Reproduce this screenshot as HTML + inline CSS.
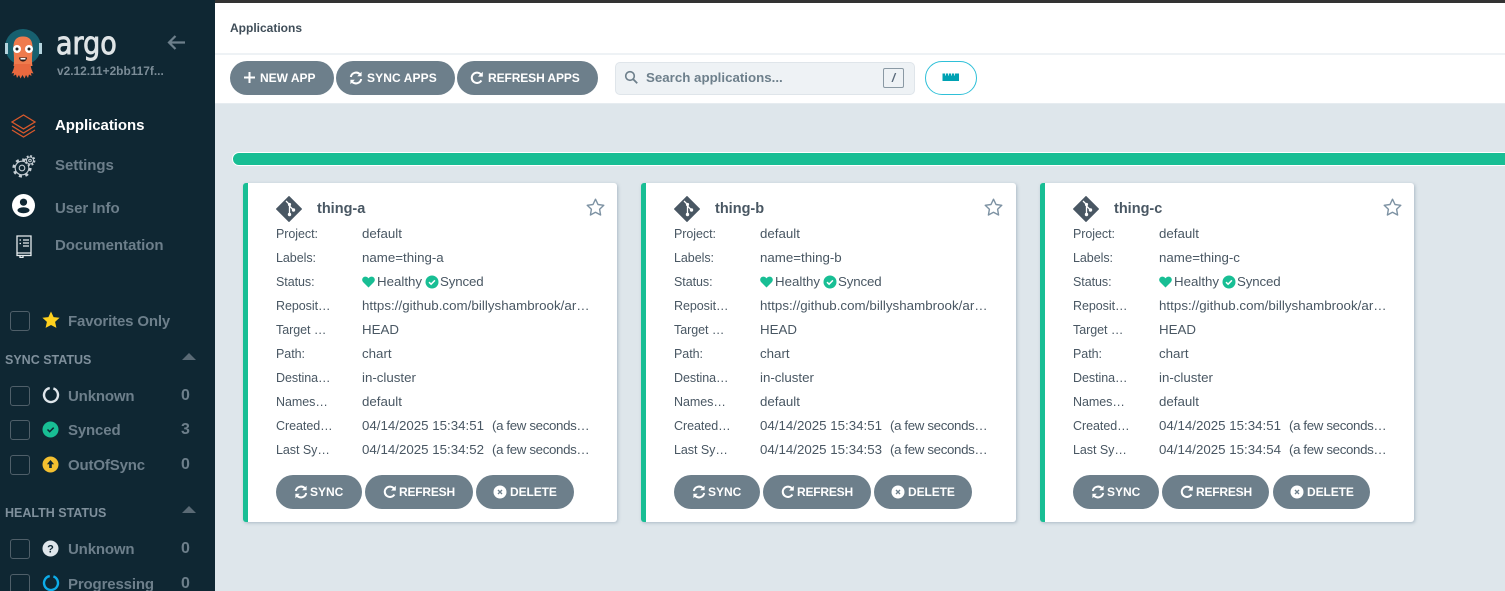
<!DOCTYPE html>
<html><head><meta charset="utf-8"><style>
*{box-sizing:border-box}
html,body{margin:0;padding:0;width:1505px;height:591px;overflow:hidden;background:#dee6eb;font-family:"Liberation Sans",sans-serif;color:#495763}
.a{position:absolute;white-space:nowrap}
#side{position:absolute;left:0;top:0;width:215px;height:591px;background:#0f2733;overflow:hidden}
.nav{position:absolute;left:55px;margin-top:1px;font-size:15px;letter-spacing:-.05px;font-weight:700;color:#6d7f8b;white-space:nowrap;line-height:20px}
.cb{position:absolute;left:10px;width:20px;height:20px;border:1.5px solid #4f5f69;border-radius:3px}
.fl{position:absolute;left:68px;margin-top:1px;font-size:15px;letter-spacing:-.15px;font-weight:700;color:#6d7f8b;line-height:20px;white-space:nowrap}
.ct{position:absolute;left:181px;font-size:16px;font-weight:700;color:#6d7f8b;line-height:20px}
.sh{position:absolute;left:5px;font-size:12.5px;font-weight:700;color:#7f909c;line-height:16px;white-space:nowrap}
.tri{position:absolute;left:182px;width:0;height:0;border-left:7px solid transparent;border-right:7px solid transparent;border-bottom:7px solid #5a6a75}
.btn{position:absolute;height:34px;border-radius:17px;background:#6d7f8b;color:#fff;font-size:12px;font-weight:700;line-height:34px;white-space:nowrap}
.btn svg{position:absolute}
.btn span{position:absolute;top:0}
.card{position:absolute;top:183px;width:374px;height:339px;background:#fff;border-left:5px solid #18be94;border-radius:3px;box-shadow:1px 1px 3px rgba(130,150,165,.55)}
.k,.v{position:absolute;line-height:16px;white-space:nowrap;color:#495763}
.k{left:28px;font-size:12.5px;letter-spacing:-.05px}.v{left:114px;font-size:13.3px}
.u{letter-spacing:.04px}
.s{left:244px;letter-spacing:-.36px}
.y{left:192px;letter-spacing:-.15px}
.ttl{position:absolute;left:69px;top:17px;font-size:14.5px;font-weight:700;line-height:18px;color:#495763}
</style></head><body>
<div class="a" style="left:0;top:0;width:1505px;height:3px;background:#333"></div>
<div class="a" style="left:215px;top:3px;width:1290px;height:52px;background:#fff;border-bottom:2px solid #eef2f5"></div>
<div class="a" style="left:215px;top:55px;width:1290px;height:49px;background:#fff;border-bottom:1px solid #e6ecf0"></div>
<div class="a" style="left:230px;top:20px;font-size:12px;font-weight:700;line-height:16px;color:#3f4d58">Applications</div>

<div class="btn" style="left:230px;top:61px;width:104px"><svg style="left:13px;top:10px" width="13" height="13" viewBox="0 0 13 13"><path d="M6.500 1v11M1 6.500h11" stroke="#fff" stroke-width="2"/></svg><span style="left:30px">NEW APP</span></div>
<div class="btn" style="left:336px;top:61px;width:119px"><svg style="left:13px;top:10px" width="14" height="14" viewBox="0 0 14 14"><path d="M1.800 6A5.300 5.300 0 0 1 11 3.400M12.200 8A5.300 5.300 0 0 1 3 10.600" fill="none" stroke="#fff" stroke-width="2"/><path d="M12.600.8v4.400H8.200zM1.400 13.200V8.800h4.400z" fill="#fff"/></svg><span style="left:31px;letter-spacing:.1px">SYNC APPS</span></div>
<div class="btn" style="left:457px;top:61px;width:141px"><svg style="left:13px;top:10px" width="14" height="14" viewBox="0 0 14 14"><path d="M11.400 9.500A5.200 5.200 0 1 1 11 3.500" fill="none" stroke="#fff" stroke-width="2"/><path d="M12.800.8v4.800H8z" fill="#fff"/></svg><span style="left:31px;letter-spacing:-.1px">REFRESH APPS</span></div>

<div class="a" style="left:615px;top:62px;width:300px;height:33px;background:#eef2f5;border:1px solid #dfe5ea;border-radius:5px"></div>
<svg class="a" style="left:624px;top:70px" width="15" height="15" viewBox="0 0 15 15"><circle cx="6" cy="6" r="4.300" fill="none" stroke="#6d7f8b" stroke-width="1.600"/><path d="M9.200 9.200l4 4" stroke="#6d7f8b" stroke-width="1.800"/></svg>
<div class="a" style="left:646px;top:69px;font-size:13.3px;font-weight:700;line-height:18px;color:#6d7f8b">Search applications...</div>
<div class="a" style="left:883px;top:68px;width:21px;height:20px;border:1px solid #8a99a4;border-radius:2px;font-size:12px;font-style:italic;font-weight:700;line-height:18px;text-align:center;color:#59697a">/</div>
<div class="a" style="left:925px;top:61px;width:52px;height:34px;border:1px solid #2fc0d8;border-radius:17px;background:#fff"></div>
<svg class="a" style="left:942px;top:72px" width="18" height="10" viewBox="0 0 18 10"><path d="M.5 1.500h16.500v7.500H.5z" fill="#00a2b3"/><path d="M3.500 1v2.500M6.500 1v2.500M9.500 1v2.500M12.500 1v2.500" stroke="#fff" stroke-width=".8"/></svg>

<div class="a" style="left:232px;top:152px;width:1290px;height:14px;background:#18be94;border:1px solid #fff;border-radius:7px"></div>

<div id="side">
<svg class="a" style="left:4px;top:28px" width="40" height="54" viewBox="0 0 40 54">
<circle cx="19" cy="19" r="18" fill="#17606f"/>
<path d="M1 15h3v11H1zM35 15h3v11h-3z" fill="#b5d3dd"/>
<path d="M9.500 21C9 11 13.500 8.500 19 8.500S29 11 28.500 21c-.3 6-1 12 0 17h-19c1-5 .3-11 0-17z" fill="#ef7b4d"/>
<path d="M10.500 36c-.3 4-1.500 7-3 9.500l2.500-.5-.5 3 2.500-1.500 1 3.500 2-3 1.500 3.500 2-3.500 2 3.500 1.500-3.500 2 3 1-3.500 2.500 1.500-.5-3 2.500.5c-1.500-2.500-2.700-5.500-3-9.500z" fill="#e9693f"/>
<circle cx="13" cy="21" r="4" fill="#fff"/><circle cx="25" cy="21" r="4" fill="#fff"/>
<circle cx="13" cy="21" r="1.500" fill="#222"/><circle cx="25" cy="21" r="1.500" fill="#222"/>
<path d="M15 29.500h8c-.4 3-2 4-4 4s-3.600-1-4-4z" fill="#2b1b17"/><path d="M16.500 30h5v1.500h-5z" fill="#fff"/>
</svg>
<div class="a" style="left:56px;top:26px;font-size:31px;line-height:36px;color:#dfe4e6;font-weight:400;font-family:'DejaVu Sans',sans-serif;-webkit-text-stroke:.9px #dfe4e6;transform:scaleX(.87);transform-origin:left">argo</div>
<div class="a" style="left:57px;top:63px;font-size:11.9px;font-weight:700;line-height:16px;color:#7b8c97">v2.12.11+2bb117f...</div>
<svg class="a" style="left:166px;top:34px" width="20" height="17" viewBox="0 0 20 17"><path d="M19 8.500H3M9.500 2L3 8.500 9.500 15" fill="none" stroke="#6d7f8b" stroke-width="2.200"/></svg>

<svg class="a" style="left:10px;top:113px" width="27" height="26" viewBox="0 0 27 26" fill="none" stroke="#d9592c" stroke-width="1.300"><path d="M13.500 2L25 9l-11.500 7L2 9z"/><path d="M2 13l11.500 7L25 13"/><path d="M2 17l11.500 7L25 17"/></svg>
<div class="nav" style="top:115px;color:#fff">Applications</div>
<svg class="a" style="left:12px;top:154px" width="24" height="24" viewBox="0 0 24 24" fill="none" stroke="#c5ced4"><circle cx="10" cy="14" r="6.800" stroke-width="1.100"/><circle cx="10" cy="14" r="8.300" stroke-width="2.600" stroke-dasharray="3 3.520"/><circle cx="10" cy="14" r="2.800" stroke-width="1.100"/><circle cx="18" cy="6.500" r="4.900" fill="#0f2733" stroke="none"/><circle cx="18" cy="6.500" r="3.500" stroke-width="1"/><circle cx="18" cy="6.500" r="4.500" stroke-width="1.800" stroke-dasharray="1.900 1.630"/><circle cx="18" cy="6.500" r="1.300" stroke-width="1"/></svg>
<div class="nav" style="top:155px">Settings</div>
<svg class="a" style="left:12px;top:194px" width="23" height="23" viewBox="0 0 23 23"><circle cx="11.500" cy="11.500" r="11.500" fill="#fff"/><circle cx="11.500" cy="8.200" r="3.600" fill="#0f2733"/><ellipse cx="11.500" cy="16.300" rx="6" ry="3" fill="#0f2733"/></svg>
<div class="nav" style="top:198px">User Info</div>
<svg class="a" style="left:15px;top:234px" width="18" height="24" viewBox="0 0 18 24" fill="none" stroke="#e6ecef" stroke-width="1.300"><path d="M2 2h14v17H2zM2 19v2.500h14V19M5 21.500V23.500h3v-2"/><path d="M8 6h6M8 9h6M8 12h6M4.500 6h1.500M4.500 9.500h1.500" stroke-width="1.200"/></svg>
<div class="nav" style="top:235px">Documentation</div>

<div class="cb" style="top:311px"></div>
<svg class="a" style="left:42px;top:311px" width="18" height="18" viewBox="0 0 18 18"><path d="M9 .5l2.600 5.600 6 .7-4.500 4.100 1.300 6L9 14 3.600 16.900l1.300-6L.4 6.800l6-.7z" fill="#ffd11e"/></svg>
<div class="fl" style="top:311px">Favorites Only</div>

<div class="sh" style="top:352px">SYNC STATUS</div><div class="tri" style="top:353px"></div>
<div class="cb" style="top:386px"></div>
<svg class="a" style="left:42px;top:386px" width="18" height="18" viewBox="0 0 18 18"><circle cx="9" cy="9" r="7" fill="none" stroke="#dfe6eb" stroke-width="2.400" stroke-dasharray="40 4" transform="rotate(-70 9 9)"/></svg>
<div class="fl" style="top:386px">Unknown</div><div class="ct" style="top:386px">0</div>
<div class="cb" style="top:420px"></div>
<svg class="a" style="left:42px;top:421px" width="17" height="17" viewBox="0 0 17 17"><circle cx="8.500" cy="8.500" r="8" fill="#18be94"/><path d="M5.500 8.500l2.200 2.200 4-4" fill="none" stroke="#0f2733" stroke-width="1.500"/></svg>
<div class="fl" style="top:420px">Synced</div><div class="ct" style="top:420px">3</div>
<div class="cb" style="top:455px"></div>
<svg class="a" style="left:42px;top:456px" width="17" height="17" viewBox="0 0 17 17"><circle cx="8.500" cy="8.500" r="8" fill="#f4c030"/><path d="M8.500 4l3.600 4.300H9.800V12H7.200V8.300H4.900z" fill="#0f2733"/></svg>
<div class="fl" style="top:455px">OutOfSync</div><div class="ct" style="top:455px">0</div>

<div class="sh" style="top:505px">HEALTH STATUS</div><div class="tri" style="top:506px"></div>
<div class="cb" style="top:539px"></div>
<svg class="a" style="left:42px;top:540px" width="17" height="17" viewBox="0 0 17 17"><circle cx="8.500" cy="8.500" r="8" fill="#dfe6eb"/><text x="8.500" y="12.500" font-size="11" font-weight="700" text-anchor="middle" fill="#0f2733" font-family="Liberation Sans">?</text></svg>
<div class="fl" style="top:539px">Unknown</div><div class="ct" style="top:539px">0</div>
<div class="cb" style="top:574px"></div>
<svg class="a" style="left:42px;top:574px" width="18" height="18" viewBox="0 0 18 18"><circle cx="9" cy="9" r="7" fill="none" stroke="#0dadea" stroke-width="2.400" stroke-dasharray="40 4" transform="rotate(-70 9 9)"/></svg>
<div class="fl" style="top:574px">Progressing</div><div class="ct" style="top:574px">0</div>
</div>

<!-- card a -->
<div class="card" style="left:243px">
<svg class="a" style="left:28px;top:13px" width="26" height="26" viewBox="0 0 26 26"><path d="M13 .5L25.500 13 13 25.500.5 13z" fill="#495763" stroke="#495763" stroke-linejoin="round" stroke-width="1"/><path d="M10 5l3.500 3.500M13.500 8.500v10M13.500 10l4 4" stroke="#fff" stroke-width="1.300"/><circle cx="13.500" cy="8.500" r="1.600" fill="#fff"/><circle cx="13.500" cy="18.500" r="1.700" fill="#fff"/><circle cx="17.500" cy="14" r="1.700" fill="#fff"/></svg>
<div class="ttl">thing-a</div>
<svg class="a" style="left:338px;top:15px" width="19" height="18" viewBox="0 0 19 18"><path d="M9.500 1.200l2.500 5.300 5.800.8-4.200 4 1 5.700-5.100-2.700-5.100 2.700 1-5.700-4.200-4 5.800-.8z" fill="none" stroke="#7d92a3" stroke-width="1.400" stroke-linejoin="round"/></svg>
<div class="k" style="top:43px">Project:</div><div class="v" style="top:43px">default</div>
<div class="k" style="top:67px">Labels:</div><div class="v" style="top:67px">name=thing-a</div>
<div class="k" style="top:91px">Status:</div>
<svg class="a" style="left:114px;top:93px" width="13" height="12" viewBox="0 0 13 12"><path d="M6.500 11.500L1 6C-.8 3.800.6.600 3.300.6c1.400 0 2.500.7 3.200 1.800C7.200 1.300 8.300.6 9.700.6 12.400.6 13.800 3.800 12 6z" fill="#18be94"/></svg>
<div class="v" style="top:91px;left:129px">Healthy</div>
<svg class="a" style="left:177px;top:92px" width="14" height="14" viewBox="0 0 14 14"><circle cx="7" cy="7" r="6.500" fill="#18be94"/><path d="M4 7.200l2.100 2 3.800-3.800" fill="none" stroke="#fff" stroke-width="1.500"/></svg>
<div class="v y" style="top:91px">Synced</div>
<div class="k" style="top:115px">Reposit…</div><div class="v u" style="top:115px">https://github.com/billyshambrook/ar…</div>
<div class="k" style="top:139px">Target …</div><div class="v" style="top:139px">HEAD</div>
<div class="k" style="top:163px">Path:</div><div class="v" style="top:163px">chart</div>
<div class="k" style="top:187px">Destina…</div><div class="v" style="top:187px">in-cluster</div>
<div class="k" style="top:211px">Names…</div><div class="v" style="top:211px">default</div>
<div class="k" style="top:235px">Created…</div><div class="v" style="top:235px">04/14/2025 15:34:51</div><div class="v s" style="top:235px">(a few seconds…</div>
<div class="k" style="top:259px">Last Sy…</div><div class="v" style="top:259px">04/14/2025 15:34:52</div><div class="v s" style="top:259px">(a few seconds…</div>
<div class="btn" style="left:28px;top:292px;width:86px"><svg style="left:18px;top:10px" width="14" height="14" viewBox="0 0 14 14"><path d="M1.800 6A5.300 5.300 0 0 1 11 3.400M12.200 8A5.300 5.300 0 0 1 3 10.600" fill="none" stroke="#fff" stroke-width="2"/><path d="M12.600.8v4.400H8.200zM1.400 13.200V8.800h4.400z" fill="#fff"/></svg><span style="left:34px">SYNC</span></div>
<div class="btn" style="left:117px;top:292px;width:108px"><svg style="left:18px;top:10px" width="14" height="14" viewBox="0 0 14 14"><path d="M11.400 9.500A5.200 5.200 0 1 1 11 3.500" fill="none" stroke="#fff" stroke-width="2"/><path d="M12.800.8v4.800H8z" fill="#fff"/></svg><span style="left:34px;letter-spacing:-.2px">REFRESH</span></div>
<div class="btn" style="left:228px;top:292px;width:98px"><svg style="left:17px;top:10px" width="14" height="14" viewBox="0 0 14 14"><circle cx="7" cy="7" r="6.500" fill="#fff"/><path d="M5 5l4 4M9 5l-4 4" stroke="#6d7f8b" stroke-width="1.300"/></svg><span style="left:34px;letter-spacing:-.1px">DELETE</span></div>
</div>

<!-- card b -->
<div class="card" style="left:641px;width:375px">
<svg class="a" style="left:28px;top:13px" width="26" height="26" viewBox="0 0 26 26"><path d="M13 .5L25.500 13 13 25.500.5 13z" fill="#495763" stroke="#495763" stroke-linejoin="round" stroke-width="1"/><path d="M10 5l3.500 3.500M13.500 8.500v10M13.500 10l4 4" stroke="#fff" stroke-width="1.300"/><circle cx="13.500" cy="8.500" r="1.600" fill="#fff"/><circle cx="13.500" cy="18.500" r="1.700" fill="#fff"/><circle cx="17.500" cy="14" r="1.700" fill="#fff"/></svg>
<div class="ttl">thing-b</div>
<svg class="a" style="left:338px;top:15px" width="19" height="18" viewBox="0 0 19 18"><path d="M9.500 1.200l2.500 5.300 5.800.8-4.200 4 1 5.700-5.100-2.700-5.100 2.700 1-5.700-4.200-4 5.800-.8z" fill="none" stroke="#7d92a3" stroke-width="1.400" stroke-linejoin="round"/></svg>
<div class="k" style="top:43px">Project:</div><div class="v" style="top:43px">default</div>
<div class="k" style="top:67px">Labels:</div><div class="v" style="top:67px">name=thing-b</div>
<div class="k" style="top:91px">Status:</div>
<svg class="a" style="left:114px;top:93px" width="13" height="12" viewBox="0 0 13 12"><path d="M6.500 11.500L1 6C-.8 3.800.6.600 3.300.6c1.400 0 2.500.7 3.200 1.800C7.200 1.300 8.300.6 9.700.6 12.400.6 13.800 3.800 12 6z" fill="#18be94"/></svg>
<div class="v" style="top:91px;left:129px">Healthy</div>
<svg class="a" style="left:177px;top:92px" width="14" height="14" viewBox="0 0 14 14"><circle cx="7" cy="7" r="6.500" fill="#18be94"/><path d="M4 7.200l2.100 2 3.800-3.800" fill="none" stroke="#fff" stroke-width="1.500"/></svg>
<div class="v y" style="top:91px">Synced</div>
<div class="k" style="top:115px">Reposit…</div><div class="v u" style="top:115px">https://github.com/billyshambrook/ar…</div>
<div class="k" style="top:139px">Target …</div><div class="v" style="top:139px">HEAD</div>
<div class="k" style="top:163px">Path:</div><div class="v" style="top:163px">chart</div>
<div class="k" style="top:187px">Destina…</div><div class="v" style="top:187px">in-cluster</div>
<div class="k" style="top:211px">Names…</div><div class="v" style="top:211px">default</div>
<div class="k" style="top:235px">Created…</div><div class="v" style="top:235px">04/14/2025 15:34:51</div><div class="v s" style="top:235px">(a few seconds…</div>
<div class="k" style="top:259px">Last Sy…</div><div class="v" style="top:259px">04/14/2025 15:34:53</div><div class="v s" style="top:259px">(a few seconds…</div>
<div class="btn" style="left:28px;top:292px;width:86px"><svg style="left:18px;top:10px" width="14" height="14" viewBox="0 0 14 14"><path d="M1.800 6A5.300 5.300 0 0 1 11 3.400M12.200 8A5.300 5.300 0 0 1 3 10.600" fill="none" stroke="#fff" stroke-width="2"/><path d="M12.600.8v4.400H8.200zM1.400 13.200V8.800h4.400z" fill="#fff"/></svg><span style="left:34px">SYNC</span></div>
<div class="btn" style="left:117px;top:292px;width:108px"><svg style="left:18px;top:10px" width="14" height="14" viewBox="0 0 14 14"><path d="M11.400 9.500A5.200 5.200 0 1 1 11 3.500" fill="none" stroke="#fff" stroke-width="2"/><path d="M12.800.8v4.800H8z" fill="#fff"/></svg><span style="left:34px;letter-spacing:-.2px">REFRESH</span></div>
<div class="btn" style="left:228px;top:292px;width:98px"><svg style="left:17px;top:10px" width="14" height="14" viewBox="0 0 14 14"><circle cx="7" cy="7" r="6.500" fill="#fff"/><path d="M5 5l4 4M9 5l-4 4" stroke="#6d7f8b" stroke-width="1.300"/></svg><span style="left:34px;letter-spacing:-.1px">DELETE</span></div>
</div>

<!-- card c -->
<div class="card" style="left:1040px">
<svg class="a" style="left:28px;top:13px" width="26" height="26" viewBox="0 0 26 26"><path d="M13 .5L25.500 13 13 25.500.5 13z" fill="#495763" stroke="#495763" stroke-linejoin="round" stroke-width="1"/><path d="M10 5l3.500 3.500M13.500 8.500v10M13.500 10l4 4" stroke="#fff" stroke-width="1.300"/><circle cx="13.500" cy="8.500" r="1.600" fill="#fff"/><circle cx="13.500" cy="18.500" r="1.700" fill="#fff"/><circle cx="17.500" cy="14" r="1.700" fill="#fff"/></svg>
<div class="ttl">thing-c</div>
<svg class="a" style="left:338px;top:15px" width="19" height="18" viewBox="0 0 19 18"><path d="M9.500 1.200l2.500 5.300 5.800.8-4.200 4 1 5.700-5.100-2.700-5.100 2.700 1-5.700-4.200-4 5.800-.8z" fill="none" stroke="#7d92a3" stroke-width="1.400" stroke-linejoin="round"/></svg>
<div class="k" style="top:43px">Project:</div><div class="v" style="top:43px">default</div>
<div class="k" style="top:67px">Labels:</div><div class="v" style="top:67px">name=thing-c</div>
<div class="k" style="top:91px">Status:</div>
<svg class="a" style="left:114px;top:93px" width="13" height="12" viewBox="0 0 13 12"><path d="M6.500 11.500L1 6C-.8 3.800.6.600 3.300.6c1.400 0 2.500.7 3.200 1.800C7.200 1.300 8.300.6 9.700.6 12.400.6 13.800 3.800 12 6z" fill="#18be94"/></svg>
<div class="v" style="top:91px;left:129px">Healthy</div>
<svg class="a" style="left:177px;top:92px" width="14" height="14" viewBox="0 0 14 14"><circle cx="7" cy="7" r="6.500" fill="#18be94"/><path d="M4 7.200l2.100 2 3.800-3.800" fill="none" stroke="#fff" stroke-width="1.500"/></svg>
<div class="v y" style="top:91px">Synced</div>
<div class="k" style="top:115px">Reposit…</div><div class="v u" style="top:115px">https://github.com/billyshambrook/ar…</div>
<div class="k" style="top:139px">Target …</div><div class="v" style="top:139px">HEAD</div>
<div class="k" style="top:163px">Path:</div><div class="v" style="top:163px">chart</div>
<div class="k" style="top:187px">Destina…</div><div class="v" style="top:187px">in-cluster</div>
<div class="k" style="top:211px">Names…</div><div class="v" style="top:211px">default</div>
<div class="k" style="top:235px">Created…</div><div class="v" style="top:235px">04/14/2025 15:34:51</div><div class="v s" style="top:235px">(a few seconds…</div>
<div class="k" style="top:259px">Last Sy…</div><div class="v" style="top:259px">04/14/2025 15:34:54</div><div class="v s" style="top:259px">(a few seconds…</div>
<div class="btn" style="left:28px;top:292px;width:86px"><svg style="left:18px;top:10px" width="14" height="14" viewBox="0 0 14 14"><path d="M1.800 6A5.300 5.300 0 0 1 11 3.400M12.200 8A5.300 5.300 0 0 1 3 10.600" fill="none" stroke="#fff" stroke-width="2"/><path d="M12.600.8v4.400H8.200zM1.400 13.200V8.800h4.400z" fill="#fff"/></svg><span style="left:34px">SYNC</span></div>
<div class="btn" style="left:117px;top:292px;width:107px"><svg style="left:18px;top:10px" width="14" height="14" viewBox="0 0 14 14"><path d="M11.400 9.500A5.200 5.200 0 1 1 11 3.500" fill="none" stroke="#fff" stroke-width="2"/><path d="M12.800.8v4.800H8z" fill="#fff"/></svg><span style="left:34px;letter-spacing:-.2px">REFRESH</span></div>
<div class="btn" style="left:228px;top:292px;width:97px"><svg style="left:17px;top:10px" width="14" height="14" viewBox="0 0 14 14"><circle cx="7" cy="7" r="6.500" fill="#fff"/><path d="M5 5l4 4M9 5l-4 4" stroke="#6d7f8b" stroke-width="1.300"/></svg><span style="left:34px;letter-spacing:-.1px">DELETE</span></div>
</div>
</body></html>
